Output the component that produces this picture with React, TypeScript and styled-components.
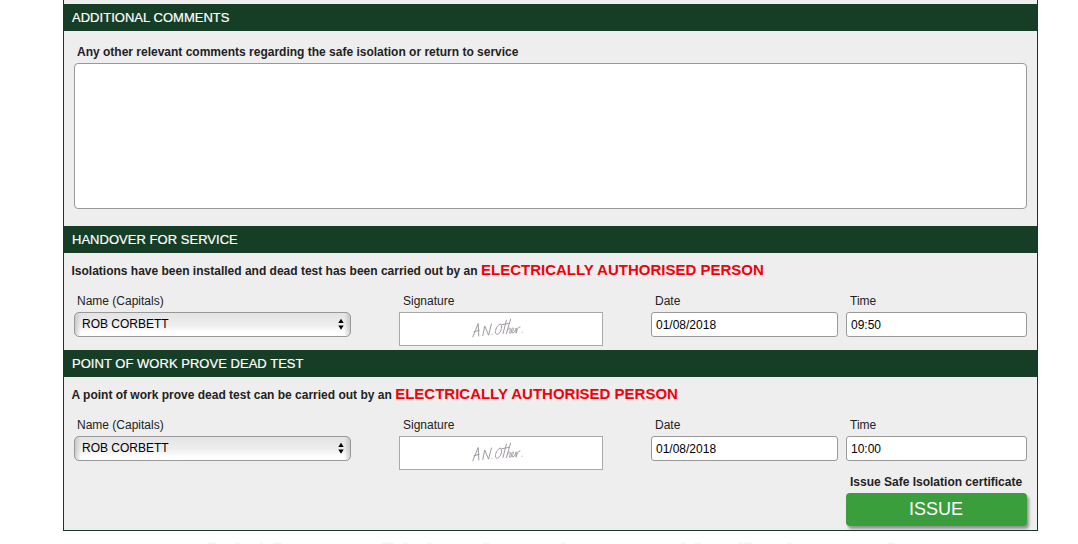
import React from "react";
import styled, { createGlobalStyle } from "styled-components";

const GlobalStyle = createGlobalStyle`
  *, *::before, *::after { box-sizing: border-box; }
  html, body { margin: 0; background: #fff; overflow: hidden; }
  body, input, textarea, button {
    font-family: "Liberation Sans", Arial, Helvetica, sans-serif;
    font-size: 12px;
    line-height: 14px;
  }
`;

const Page = styled.main`
  height: 544px;
  padding-left: 63px;
  overflow: hidden;
`;

const Form = styled.form`
  display: flex;
  flex-direction: column;
  width: 975px;
  height: 531px;
  padding-top: 4px;
  border: 1px solid #1b3629;
  border-top: 0;
  background: #eee;
  color: #222;
`;

const Section = styled.section<{ $height: number }>`
  display: flex;
  flex-direction: column;
  height: ${(p) => p.$height}px;
`;

const SectionTitle = styled.h2`
  flex: none;
  height: 27px;
  margin: 0;
  padding: 0 8px;
  background: #163d26;
  color: #fff;
  font-size: 13px;
  font-weight: 400;
  letter-spacing: 0.03px;
  line-height: 27px;
  -webkit-text-stroke: 0.2px #fff;
`;

const CommentsLabel = styled.label`
  display: flex;
  flex-direction: column;
  gap: 4px;
  padding: 14px 10px 0;
  font-weight: 700;
  text-indent: 3px;
`;

const Comments = styled.textarea`
  display: block;
  width: 953px;
  height: 146px;
  border: 1px solid #999;
  border-radius: 4px;
  background: #fff;
  resize: none;
`;

const Statement = styled.p`
  height: 18px;
  margin: 8px 0 0 7.5px;
  font-weight: 700;
  line-height: 18px;
  white-space: nowrap;
`;

const Role = styled.span`
  color: #f3000a;
  font-size: 15px;
`;

const Fields = styled.div`
  display: grid;
  grid-template-columns: 325px 252px 195px 181px;
  padding: 15px 10px 0;
`;

const Field = styled.label<{ $inset?: number }>`
  display: flex;
  flex-direction: column;
  align-items: flex-start;
  gap: 4px;
  height: 52px;

  > span {
    padding-left: ${(p) => p.$inset ?? 4}px;
  }
`;

const Select = styled.div`
  display: flex;
  align-items: center;
  justify-content: space-between;
  width: 277px;
  height: 25px;
  padding: 0 5px 1px 7px;
  border: 1px solid #999;
  border-radius: 5px;
  background:
    linear-gradient(90deg, rgba(190, 190, 190, 0.75), transparent 6px, transparent calc(100% - 6px), rgba(190, 190, 190, 0.75)),
    linear-gradient(#e4e4e4, #ededed 50%, #fff 85%);
  color: #000;
`;

const Input = styled.input<{ $width: number }>`
  width: ${(p) => p.$width}px;
  height: 25px;
  padding: 0 4px;
  border: 1px solid #999;
  border-radius: 3px;
  background: #fff;
  color: #000;
`;

const SignatureBox = styled.div`
  width: 204px;
  height: 34px;
  border: 1px solid #aaa;
  background: #fff;

  svg { display: block; }
`;

const IssueArea = styled.div`
  display: flex;
  flex-direction: column;
  align-self: flex-end;
  gap: 4px;
  width: 181px;
  margin: 5px 10px 0 0;
  font-weight: 700;

  > span {
    padding-left: 4px;
    white-space: nowrap;
  }
`;

const IssueButton = styled.button`
  height: 33px;
  padding: 0 1px 2px 0;
  border: 0;
  border-radius: 4px;
  background: #3a9e3c;
  box-shadow: 2px 3px 3px rgba(0, 0, 0, 0.38);
  color: #fff;
  font-size: 18px;
  line-height: 30px;
`;

const Arrows = () => (
  <svg width="7" height="12" viewBox="0 0 7 12" aria-hidden="true">
    <path d="M3 .8 5.7 5H.3ZM3 11.8 .3 7.6h5.4Z" fill="#000" />
  </svg>
);

const Signature = () => (
  <SignatureBox>
    <svg
      width="202"
      height="32"
      viewBox="0 0 202 32"
      fill="none"
      stroke="#a09aa2"
      strokeWidth="1"
      strokeLinecap="round"
      strokeLinejoin="round"
      role="img"
      aria-label="Signature"
    >
      <path d="M72.8 23.8 78.2 10.5 78.8 23M74 18.8l5.2-1.5" />
      <path d="M82.8 22.5l1.9-9.5L88.6 22.2l2.8-11.2M92 21.6l.2-.2" />
      <path d="M100 11.2c-2.8.8-5 6-4.6 8.6.7 2.7 4 1.3 5.3-1.8 1.3-3.3 1.2-7.2-.7-6.8" />
      <path d="M103 20.6 106.4 7.2M101.6 11.8l7.2-1.4M106.4 20.6l4.2-14.4M107.4 17.6c1.4-3.2 3.2-3 2.9-1.3l-.7 3.9c2.4.2 4.9-5 3.5-5.4-1.8.2-2.3 5.2-.2 5.1 2.1-.3 2.6-3.3 3.3-5l-.1 5.3c1-3.5 1.8-6.2 3.9-6.4M122.1 19.4l.2-.1" />
    </svg>
  </SignatureBox>
);

const Handover = ({ date, time }: { date: string; time: string }) => (
  <Fields>
    <Field $inset={3}>
      <span>Name (Capitals)</span>
      <Select>
        ROB CORBETT
        <Arrows />
      </Select>
    </Field>
    <Field>
      <span>Signature</span>
      <Signature />
    </Field>
    <Field>
      <span>Date</span>
      <Input $width={187} defaultValue={date} />
    </Field>
    <Field>
      <span>Time</span>
      <Input $width={181} defaultValue={time} />
    </Field>
  </Fields>
);

const FooterEdge = styled.svg`
  display: block;
  margin-top: 11px;
`;

const footerMarks = [
  [145, 8], [172, 5], [197, 3], [210, 9], [318, 13], [340, 5], [364, 5], [420, 6],
  [497, 6], [617, 6], [632, 6], [675, 14], [724, 5], [825, 7],
];

export default function App() {
  return (
    <Page>
      <GlobalStyle />
      <Form onSubmit={(e: React.FormEvent) => e.preventDefault()}>
        <Section $height={222}>
          <SectionTitle>ADDITIONAL COMMENTS</SectionTitle>
          <CommentsLabel>
            Any other relevant comments regarding the safe isolation or return to service
            <Comments />
          </CommentsLabel>
        </Section>
        <Section $height={124}>
          <SectionTitle>HANDOVER FOR SERVICE</SectionTitle>
          <Statement>
            Isolations have been installed and dead test has been carried out by an{" "}
            <Role>ELECTRICALLY AUTHORISED PERSON</Role>
          </Statement>
          <Handover date="01/08/2018" time="09:50" />
        </Section>
        <Section $height={180}>
          <SectionTitle>POINT OF WORK PROVE DEAD TEST</SectionTitle>
          <Statement>
            A point of work prove dead test can be carried out by an{" "}
            <Role>ELECTRICALLY AUTHORISED PERSON</Role>
          </Statement>
          <Handover date="01/08/2018" time="10:00" />
          <IssueArea>
            <span>Issue Safe Isolation certificate</span>
            <IssueButton>ISSUE</IssueButton>
          </IssueArea>
        </Section>
      </Form>
      <FooterEdge width="975" height="2" aria-hidden="true">
        {footerMarks.map(([x, w]) => (
          <rect key={x} x={x} y="0.5" width={w} height="1.5" fill="#f5f5f5" />
        ))}
      </FooterEdge>
    </Page>
  );
}
